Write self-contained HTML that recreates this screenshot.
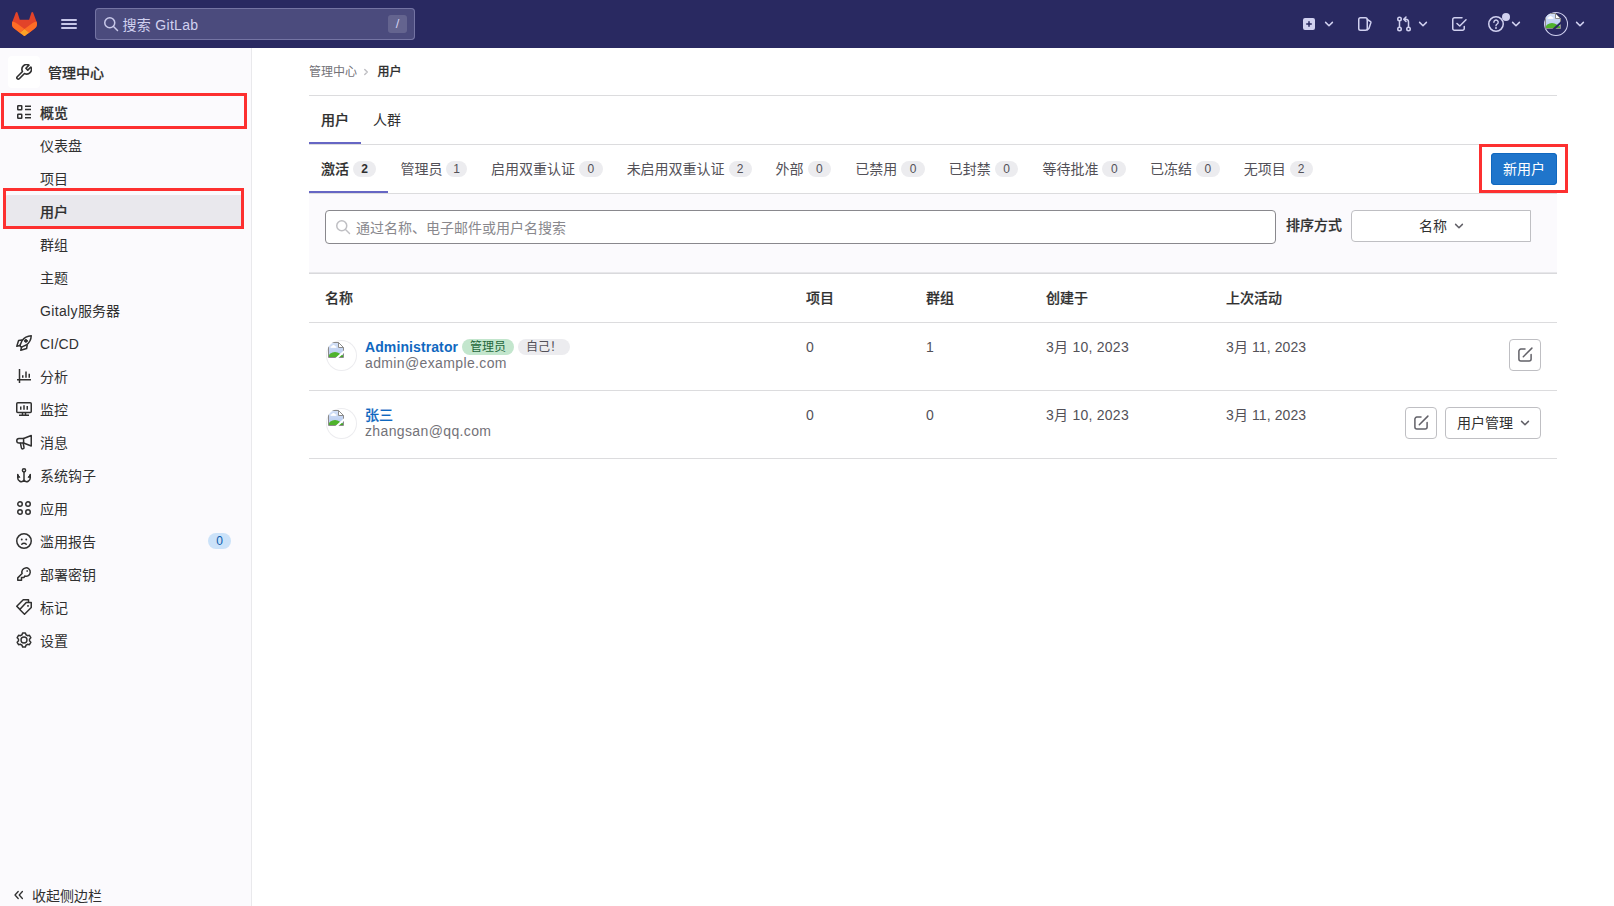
<!DOCTYPE html>
<html lang="zh-CN">
<head>
<meta charset="utf-8">
<title>用户 · 管理中心 · GitLab</title>
<style>
*{box-sizing:border-box;margin:0;padding:0}
html,body{width:1614px;height:906px;overflow:hidden;background:#fff}
body{font-family:"Liberation Sans","Noto Sans CJK SC",sans-serif;font-size:14px;line-height:20px;color:#303030;position:relative}
a{color:inherit;text-decoration:none}
svg{display:block}
/* ---------- top nav ---------- */
.nav{position:absolute;left:0;top:0;width:1614px;height:48px;background:#292961}
.nav .logo{position:absolute;left:12px;top:12px;width:25px;height:24px}
.nav .burger{position:absolute;left:61px;top:19px;width:16px;height:10px}
.nav .burger i{position:absolute;left:0;width:16px;height:2px;background:#c6c6e8;border-radius:1px}
.nav .search{position:absolute;left:95px;top:8px;width:320px;height:32px;border-radius:4px;background:#4b4b7d;box-shadow:inset 0 0 0 1px #7474a3}
.nav .search .txt{position:absolute;left:27.500px;top:7px;font-size:14px;line-height:20px;color:#d1d1f0;letter-spacing:.3px}
.nav .search .kbd{position:absolute;right:8px;top:7px;width:19px;height:18px;border-radius:3px;background:#64648f;color:#d1d1f0;font-size:13px;line-height:18px;text-align:center}
.nav .search svg{position:absolute;left:8px;top:8px;color:#c9c9ea}
.nic{position:absolute;top:16px;width:16px;height:16px;color:#d1d1f0}
.ndot{position:absolute;left:1502px;top:13px;width:8px;height:8px;border-radius:50%;background:#d1d1f0}
.nav-av{position:absolute;left:1544px;top:12px;width:24px;height:24px;border-radius:50%;box-shadow:inset 0 0 0 1px #d1d1f0;overflow:hidden}
/* ---------- sidebar ---------- */
.side{position:absolute;left:0;top:48px;width:252px;height:858px;background:#fbfafd;border-right:1px solid #e9e9ec}
.side .ctx svg{position:absolute;left:8px;top:8px}
.side .ctx{position:absolute;left:8px;top:8px;width:32px;height:32px;border-radius:4px;background:#fff}
.side .ctxt{position:absolute;left:48px;top:15px;font-weight:500;-webkit-text-stroke:.2px currentColor;font-size:14px;line-height:20px;color:#303030}
.side .it{position:absolute;left:4px;width:240px;height:32px;border-radius:4px;font-size:14px;line-height:34px;color:#303030;padding-left:36px}
.side .it svg{position:absolute;left:12px;top:8px}
.side .it.b{font-weight:500;-webkit-text-stroke:.2px currentColor}
.side .it.act{background:#e9e8ed;font-weight:500;-webkit-text-stroke:.2px currentColor}
.side .cnt{-webkit-text-stroke:0;font-weight:normal;position:absolute;right:13px;top:8px;height:16px;width:23px;border-radius:8px;background:#cbe2f9;color:#0b5cad;font-size:12px;line-height:16px;text-align:center}
.red{position:absolute;border:3px solid #fd3030;pointer-events:none}
/* ---------- content ---------- */
.main{position:absolute;left:309px;top:48px;width:1248px}
.hl{position:absolute;left:0;width:1248px;height:1px;background:#dcdcde}
.abs{position:absolute;white-space:nowrap}
.badge{display:inline-block;height:16px;border-radius:8px;background:#ececef;color:#535158;font-size:12px;line-height:16px;padding:0 8px;text-align:center;vertical-align:middle}

.crumb{position:absolute;left:0;top:14px;font-size:12px;line-height:20px;color:#737278;white-space:nowrap}
.crumb b{color:#303030;font-weight:500;-webkit-text-stroke:.2px currentColor}
.crumb .sep{display:inline-block;width:20.5px;height:8px;position:relative}
.crumb .sep svg{position:absolute;left:5.3px;top:0}
.tabs{position:absolute;left:0;width:1248px;height:49px;border-bottom:1px solid #dcdcde;display:flex;white-space:nowrap}
.tab{height:48px;padding:14px 12px;font-size:14px;line-height:20px;color:#303030;display:flex;align-items:center}
.sub .tab{color:#535158}
.tab.on,.sub .tab.on{color:#303030;font-weight:500;-webkit-text-stroke:.2px currentColor;box-shadow:inset 0 -2px 0 0 #6666c4}
.tab .badge{margin-left:4px;width:23.65px;padding:0;font-weight:normal}
.tab .badge.b1{width:20.6px}
.tab .badge.b2{width:22.9px}
.tab.on .badge.b2{width:23.4px}
.tab.on .badge{font-weight:bold;color:#303030;-webkit-text-stroke:0}
.btn-new{position:absolute;left:1182px;top:105px;width:66px;height:32px;border-radius:4px;background:#1f75cb;color:#fff;font-size:14px;line-height:32px;text-align:center;box-shadow:inset 0 0 0 1px #1068bf}
.filter{position:absolute;left:0;top:146px;width:1248px;height:80px;background:#fbfafd;border-bottom:1px solid #d9d9dc;box-shadow:inset 0 -1px 0 #e7e7ea}
.filter .inp{position:absolute;left:16px;top:16px;width:951px;height:34px;border:1px solid #89888d;border-radius:4px;background:#fff}
.filter .inp span{position:absolute;left:30px;top:7px;font-size:14px;line-height:20px;color:#89888d}
.filter .inp svg{position:absolute;left:9px;top:8px;color:#bfbfc3}
.filter .lbl{position:absolute;left:977px;top:21px;font-weight:500;-webkit-text-stroke:.2px currentColor;font-size:14px;line-height:20px}
.filter .dd{position:absolute;left:1042px;top:16px;width:180px;height:32px;border:1px solid #bfbfc3;border-radius:4px 0 0 4px;background:#fff;font-size:14px;line-height:30px;color:#303030}
.th{position:absolute;top:240px;font-weight:500;-webkit-text-stroke:.2px currentColor;font-size:14px;line-height:20px;white-space:nowrap}
.td{position:absolute;font-size:14px;line-height:20px;color:#535158;white-space:nowrap;letter-spacing:.25px}
.av{position:absolute;left:17px;width:31px;height:31px;border-radius:50%;box-shadow:inset 0 0 0 1px #ececef;background:#fff;overflow:hidden}
.av .brk{position:absolute;left:2px;top:2px}
.nav-av .brk{position:absolute;left:.8px;top:1.2px}
.nm{position:absolute;left:56px;font-size:14px;line-height:16px;white-space:nowrap;display:flex;align-items:flex-start}
.nm .badge{margin-left:4px;margin-top:0}
.nm a{color:#1068bf;font-weight:bold;letter-spacing:.1px}
.nm a.cj{font-weight:500;-webkit-text-stroke:.2px currentColor;letter-spacing:0}
.em{position:absolute;left:56px;font-size:14px;line-height:16px;color:#737278;white-space:nowrap;letter-spacing:.37px}
.ibtn{position:absolute;width:32px;height:32px;border-radius:4px;background:#fff;border:1px solid #bfbfc3}
.ibtn svg{position:absolute;left:7px;top:7px;color:#626168}
.mbtn{position:absolute;width:96px;height:32px;border-radius:4px;background:#fff;border:1px solid #bfbfc3;font-size:14px;line-height:30px;padding-left:11px;color:#303030}
</style>
</head>
<body>
<div class="nav">
  <svg class="logo" viewBox="0 0 25 24"><path d="m24.507 9.5-.034-.09L21.082.562a.896.896 0 0 0-1.694.091l-2.290 7.010H7.825L5.535.653a.898.898 0 0 0-1.694-.090L.451 9.411.416 9.500a6.297 6.297 0 0 0 2.090 7.278l.012.010.030.022 5.160 3.867 2.560 1.935 1.554 1.176a1.051 1.051 0 0 0 1.268 0l1.555-1.176 2.560-1.935 5.197-3.890.014-.010A6.297 6.297 0 0 0 24.507 9.500Z" fill="#E24329"/><path d="m24.507 9.5-.034-.09a11.440 11.440 0 0 0-4.560 2.051l-7.447 5.632 4.742 3.584 5.197-3.890.014-.010A6.297 6.297 0 0 0 24.507 9.500Z" fill="#FC6D26"/><path d="m7.707 20.677 2.560 1.935 1.555 1.176a1.051 1.051 0 0 0 1.268 0l1.555-1.176 2.560-1.935-4.743-3.584-4.755 3.584Z" fill="#FCA326"/><path d="M5.010 11.461a11.430 11.430 0 0 0-4.560-2.050L.416 9.500a6.297 6.297 0 0 0 2.090 7.278l.012.010.030.022 5.160 3.867 4.745-3.584-7.444-5.632Z" fill="#FC6D26"/></svg>
  <div class="burger"><i style="top:0"></i><i style="top:4px"></i><i style="top:8px"></i></div>
  <div class="search">
    <svg width="16" height="16" viewBox="0 0 16 16"><g fill="none" stroke="currentColor" stroke-width="1.5" stroke-linecap="round" stroke-linejoin="round"><circle cx="6.750" cy="6.750" r="5"/><path d="M10.500 10.500 14.500 14.500"/></g></svg>
    <span class="txt">搜索 GitLab</span><span class="kbd">/</span>
  </div>
  <div class="nic" style="left:1301px"><svg width="16" height="16" viewBox="0 0 16 16"><path fill="currentColor" fill-rule="evenodd" d="M4 2a2 2 0 0 0-2 2v8a2 2 0 0 0 2 2h8a2 2 0 0 0 2-2V4a2 2 0 0 0-2-2H4zm4.750 3.750a.75.75 0 0 0-1.500 0v1.500h-1.500a.75.75 0 0 0 0 1.500h1.500v1.500a.75.75 0 0 0 1.500 0v-1.500h1.500a.75.75 0 0 0 0-1.500h-1.500v-1.500z"/></svg></div>
  <div class="nic" style="left:1321px"><svg width="16" height="16" viewBox="0 0 16 16"><path fill="none" stroke="currentColor" stroke-width="1.5" stroke-linecap="round" stroke-linejoin="round" d="M4.6 6.4 8 9.8 11.4 6.4"/></svg></div>
  <div class="nic" style="left:1356px"><svg width="16" height="16" viewBox="0 0 16 16"><g fill="none" stroke="currentColor" stroke-width="1.5" stroke-linecap="round" stroke-linejoin="round"><rect x="2.750" y="1.750" width="8.500" height="12.500" rx="1.750"/><path d="M11.250 3.500l3.300 2.100a.8.8 0 0 1 .35.900L12.900 12.500l-1.650 1.300"/></g></svg></div>
  <div class="nic" style="left:1396px"><svg width="16" height="16" viewBox="0 0 16 16"><g fill="none" stroke="currentColor" stroke-width="1.5" stroke-linecap="round" stroke-linejoin="round"><circle cx="3.500" cy="3" r="1.750"/><circle cx="3.500" cy="13" r="1.750"/><circle cx="12.500" cy="13" r="1.750"/><path d="M3.500 4.750v6.500M12.500 11.250V6a2.750 2.750 0 0 0-2.750-2.750H8M10 1 7.750 3.250 10 5.500"/></g></svg></div>
  <div class="nic" style="left:1415px"><svg width="16" height="16" viewBox="0 0 16 16"><path fill="none" stroke="currentColor" stroke-width="1.5" stroke-linecap="round" stroke-linejoin="round" d="M4.6 6.4 8 9.8 11.4 6.4"/></svg></div>
  <div class="nic" style="left:1451px"><svg width="16" height="16" viewBox="0 0 16 16"><g fill="none" stroke="currentColor" stroke-width="1.5" stroke-linecap="round" stroke-linejoin="round"><path d="M13.250 10.500v2a1.750 1.750 0 0 1-1.750 1.750h-8A1.750 1.750 0 0 1 1.750 12.500v-9A1.750 1.750 0 0 1 3.500 1.750h7.500"/><path d="M6 7.500l2.750 2.500L15 3.750"/></g></svg></div>
  <div class="nic" style="left:1488px"><svg width="16" height="16" viewBox="0 0 16 16"><g fill="none" stroke="currentColor" stroke-width="1.5" stroke-linecap="round" stroke-linejoin="round"><circle cx="8" cy="8" r="7.250"/><path d="M5.900 6.200a2.150 2.150 0 1 1 3.300 1.800c-.8.500-1.200.900-1.200 1.750" stroke-width="1.400"/><circle cx="8" cy="12" r=".95" fill="currentColor" stroke="none"/></g></svg></div>
  <div class="ndot"></div>
  <div class="nic" style="left:1508px"><svg width="16" height="16" viewBox="0 0 16 16"><path fill="none" stroke="currentColor" stroke-width="1.5" stroke-linecap="round" stroke-linejoin="round" d="M4.6 6.4 8 9.8 11.4 6.4"/></svg></div>
  <div class="nav-av"><svg class="brk" width="16" height="16" viewBox="0 0 16 16"><defs><linearGradient id="sk1" x1="0" y1="0" x2="0" y2="1"><stop offset="0" stop-color="#d3e0f7"/><stop offset="1" stop-color="#b4c9ee"/></linearGradient><clipPath id="pg1"><path d="M1 1H10.500V5.500H15V15H1z"/></clipPath></defs><path d="M.5.500H10.500L15.500 5.500V15.500H.500z" fill="#fff" stroke="#8b8b8b"/><g clip-path="url(#pg1)"><rect x="1" y="1" width="14" height="14" fill="url(#sk1)"/><path d="M3 5.500c.5-1.500 1.500-2.500 2.500-2.500s2 1 2.500 2.500z" fill="#fff"/><rect x="2.500" y="4.500" width="6" height="1.200" fill="#fff"/><ellipse cx="7" cy="15.500" rx="6.500" ry="5.500" fill="#4fb32c"/><ellipse cx="13" cy="16" rx="3.500" ry="3" fill="#45a626"/></g><path d="M10.500.500V5.500H15.500" fill="#fff" stroke="#8b8b8b"/><path d="M10.500.500 15.500 5.500" stroke="#8b8b8b" fill="none"/><path d="M6.800 16.500 9.800 16.500 16.500 10.600 16.500 7.900z" fill="#292961"/></svg></div>
  <div class="nic" style="left:1572px"><svg width="16" height="16" viewBox="0 0 16 16"><path fill="none" stroke="currentColor" stroke-width="1.5" stroke-linecap="round" stroke-linejoin="round" d="M4.6 6.4 8 9.8 11.4 6.4"/></svg></div>
</div>
<div class="side">
  <div class="ctx"><svg width="16" height="16" viewBox="0 0 16 16"><path fill="none" stroke="currentColor" stroke-width="1.5" stroke-linecap="round" stroke-linejoin="round" transform="translate(8 8) scale(1.08) translate(-8 -8)" d="M12.6 1.64 9.76 4.48 11.52 6.24 14.36 3.4A4.4 4.4 0 0 1 8.45 9.39L3.62 14.22A1.3 1.3 0 0 1 1.78 12.38L6.61 7.55A4.4 4.4 0 0 1 12.6 1.64z"/></svg></div>
  <div class="ctxt">管理中心</div>
  <div class="it b" style="top:48px"><svg width="16" height="16" viewBox="0 0 16 16"><g fill="none" stroke="currentColor" stroke-width="1.5" stroke-linecap="butt" stroke-linejoin="miter"><rect x="1.75" y="1.75" width="4" height="4" rx=".5"/><rect x="1.75" y="10.25" width="4" height="4" rx=".5"/><path d="M9 2.25h6M9 5.5h6M9 10.5h6M9 13.75h6"/></g></svg>概览</div>
  <div class="it" style="top:81px">仪表盘</div>
  <div class="it" style="top:114px">项目</div>
  <div class="it act" style="top:147px">用户</div>
  <div class="it" style="top:180px">群组</div>
  <div class="it" style="top:213px">主题</div>
  <div class="it" style="top:246px"><span style="letter-spacing:.35px">Gitaly</span>服务器</div>
  <div class="it" style="top:279px;letter-spacing:.2px"><svg width="16" height="16" viewBox="0 0 16 16"><g fill="none" stroke="currentColor" stroke-width="1.5" stroke-linecap="round" stroke-linejoin="round"><path d="M15.25.75C11.5.9 8.2 2.6 6 5.75L4.1 10.1C3.8 11.3 4.7 12.2 5.9 11.9l4.35-1.9C13.4 7.8 15.1 4.5 15.25.75z"/><path d="M6 5 2.6 5.5 .8 11.2 4 10.5"/><path d="M11.2 10 10.6 13.5 4.8 15.2 5.6 12"/><circle cx="9.9" cy="5.9" r="1.4" fill="currentColor" stroke-width="1"/></g></svg>CI/CD</div>
  <div class="it" style="top:312px"><svg width="16" height="16" viewBox="0 0 16 16"><g fill="none" stroke="currentColor" stroke-width="1.5" stroke-linecap="butt" stroke-linejoin="miter"><path d="M3.5 1v14M1 11.75h14"/><path d="M6.75 7.25v2.5M10 3.5v6.25M13.25 5.75v4"/></g></svg>分析</div>
  <div class="it" style="top:345px"><svg width="16" height="16" viewBox="0 0 16 16"><g fill="none" stroke="currentColor" stroke-width="1.5" stroke-linecap="butt" stroke-linejoin="miter"><rect x=".75" y="1.75" width="14.5" height="9.75" rx="1"/><path d="M3 14.25h10M6.5 11.5v2.75M9.5 11.5v2.75"/><path d="M4.75 5.5v3.25M8 4.25v4.5M11.25 5v3.75"/></g></svg>监控</div>
  <div class="it" style="top:378px"><svg width="16" height="16" viewBox="0 0 16 16"><g fill="none" stroke="currentColor" stroke-width="1.5" stroke-linecap="round" stroke-linejoin="round"><path d="M7.6 4.5H3A2.25 2.25 0 0 0 3 9H7.6"/><path d="M7.6 4.5 15.25 1.5V12L7.6 9z"/><path d="M4.4 9.2l1 4.6a1.3 1.3 0 0 0 2.6-.5L7.2 9.2"/></g></svg>消息</div>
  <div class="it" style="top:411px"><svg width="16" height="16" viewBox="0 0 16 16"><g fill="none" stroke="currentColor" stroke-width="1.5" stroke-linecap="round" stroke-linejoin="round"><circle cx="8" cy="3.3" r="1.6"/><path d="M8 5v8.25"/><path d="M1.75 7.5V10a3.6 4 0 0 0 6.25 3.25A3.6 4 0 0 0 14.250 10V7.500"/><path d="M1.75 7.5 3.9 10.300H1.900zM14.250 7.500 12.100 10.300h2z" fill="currentColor" stroke-width="1"/></g></svg>系统钩子</div>
  <div class="it" style="top:444px"><svg width="16" height="16" viewBox="0 0 16 16"><g fill="none" stroke="currentColor" stroke-width="1.5" stroke-linecap="round" stroke-linejoin="round"><circle cx="4" cy="4" r="2.25"/><circle cx="12" cy="4" r="2.25"/><circle cx="4" cy="12" r="2.25"/><circle cx="12" cy="12" r="2.25"/></g></svg>应用</div>
  <div class="it" style="top:477px"><svg width="16" height="16" viewBox="0 0 16 16"><g fill="none" stroke="currentColor" stroke-width="1.5" stroke-linecap="round" stroke-linejoin="round"><circle cx="8" cy="8" r="7.25"/><path d="M5.75 11.25a3 3 0 0 1 4.5 0" stroke-width="1.4"/><circle cx="5.75" cy="6.5" r=".95" fill="currentColor" stroke="none"/><circle cx="10.25" cy="6.5" r=".95" fill="currentColor" stroke="none"/></g></svg>滥用报告<span class="cnt">0</span></div>
  <div class="it" style="top:510px"><svg width="16" height="16" viewBox="0 0 16 16"><g fill="none" stroke="currentColor" stroke-width="1.5" stroke-linecap="butt" stroke-linejoin="round"><path d="M1.75 14.25V11.9L6.100 7.500A4.200 4.200 0 1 1 8.700 10.050L8 11.500H5.500V14.250z"/><rect x="10.400" y="4.200" width="1.600" height="1.600" rx=".3" fill="currentColor" stroke="none"/></g></svg>部署密钥</div>
  <div class="it" style="top:543px"><svg width="16" height="16" viewBox="0 0 16 16"><g fill="none" stroke="currentColor" stroke-width="1.5" stroke-linecap="butt" stroke-linejoin="round"><path d="M10.25 3.5H15.25V8.500L8.500 15.250 3.750 10.500z"/><path d="M12.500 3.250V.750H7.250L.750 7.250 3.600 10.100"/><rect x="11.200" y="6.100" width="1.600" height="1.600" rx=".3" fill="currentColor" stroke="none"/></g></svg>标记</div>
  <div class="it" style="top:576px"><svg width="16" height="16" viewBox="0 0 16 16"><g fill="none" stroke="currentColor" stroke-width="1.5" stroke-linecap="round" stroke-linejoin="round"><path d="M10.01 2.77 L9.37 0.93 L6.63 0.93 L5.99 2.77 L4.48 3.65 L2.57 3.28 L1.19 5.66 L2.47 7.12 L2.47 8.88 L1.19 10.34 L2.57 12.72 L4.48 12.35 L5.99 13.23 L6.63 15.07 L9.37 15.07 L10.01 13.23 L11.52 12.35 L13.43 12.72 L14.81 10.34 L13.53 8.88 L13.53 7.12 L14.81 5.66 L13.43 3.28 L11.52 3.65Z"/><circle cx="8" cy="8" r="3" stroke-width="1.4"/></g></svg>设置</div>
  <div class="abs" style="left:12.5px;top:839px"><svg width="16" height="16" viewBox="0 0 16 16"><g fill="none" stroke="currentColor" stroke-width="1.5" stroke-linecap="round" stroke-linejoin="round"><path d="M5.2 4.5 2 8l3.200 3.500M9.400 4.500 6.200 8l3.200 3.500" stroke-width="1.300"/></g></svg></div>
  <div class="abs" style="left:32px;top:838px;font-size:14px;line-height:20px">收起侧边栏</div>
</div>
<div class="red" style="left:1px;top:93px;width:246px;height:36px"></div>
<div class="red" style="left:3px;top:188px;width:241px;height:41px"></div>
<div class="main">
  <div class="crumb">管理中心<span class="sep"><svg width="8" height="8" viewBox="0 0 8 8"><path d="M2.75 1.4 5.300 4 2.750 6.600" fill="none" stroke="#bfbfc3" stroke-width="1.400" stroke-linecap="round" stroke-linejoin="round"/></svg></span><b>用户</b></div>
  <div class="hl" style="top:47px"></div>
  <div class="tabs" style="top:48px">
    <div class="tab on">用户</div>
    <div class="tab">人群</div>
  </div>
  <div class="tabs sub" style="top:97px">
    <div class="tab on">激活<span class="badge b2">2</span></div>
    <div class="tab">管理员<span class="badge b1">1</span></div>
    <div class="tab">启用双重认证<span class="badge">0</span></div>
    <div class="tab">未启用双重认证<span class="badge b2">2</span></div>
    <div class="tab">外部<span class="badge">0</span></div>
    <div class="tab">已禁用<span class="badge">0</span></div>
    <div class="tab">已封禁<span class="badge">0</span></div>
    <div class="tab">等待批准<span class="badge">0</span></div>
    <div class="tab">已冻结<span class="badge">0</span></div>
    <div class="tab">无项目<span class="badge b2">2</span></div>
  </div>
  <div class="btn-new">新用户</div>
  <div class="filter">
    <div class="inp"><svg width="16" height="16" viewBox="0 0 16 16"><g fill="none" stroke="currentColor" stroke-width="1.5" stroke-linecap="round" stroke-linejoin="round"><circle cx="6.750" cy="6.750" r="5"/><path d="M10.500 10.500 14.500 14.500"/></g></svg><span>通过名称、电子邮件或用户名搜索</span></div>
    <div class="lbl">排序方式</div>
    <div class="dd"><span class="abs" style="left:67px;top:0">名称</span><span class="abs" style="left:99px;top:7px;color:#626168"><svg width="16" height="16" viewBox="0 0 16 16"><path fill="none" stroke="currentColor" stroke-width="1.5" stroke-linecap="round" stroke-linejoin="round" d="M4.6 6.4 8 9.8 11.4 6.4"/></svg></span></div>
  </div>
  <div class="th" style="left:16px">名称</div>
  <div class="th" style="left:497px">项目</div>
  <div class="th" style="left:617px">群组</div>
  <div class="th" style="left:737px">创建于</div>
  <div class="th" style="left:917px">上次活动</div>
  <div class="hl" style="top:274px"></div>
  <div class="av" style="top:292px"><svg class="brk" width="16" height="16" viewBox="0 0 16 16"><defs><linearGradient id="sk2" x1="0" y1="0" x2="0" y2="1"><stop offset="0" stop-color="#d3e0f7"/><stop offset="1" stop-color="#b4c9ee"/></linearGradient><clipPath id="pg2"><path d="M1 1H10.500V5.500H15V15H1z"/></clipPath></defs><path d="M.5.500H10.500L15.500 5.500V15.500H.500z" fill="#fff" stroke="#8b8b8b"/><g clip-path="url(#pg2)"><rect x="1" y="1" width="14" height="14" fill="url(#sk2)"/><path d="M3 5.500c.5-1.500 1.500-2.500 2.500-2.500s2 1 2.500 2.500z" fill="#fff"/><rect x="2.500" y="4.500" width="6" height="1.200" fill="#fff"/><ellipse cx="7" cy="15.500" rx="6.500" ry="5.500" fill="#4fb32c"/><ellipse cx="13" cy="16" rx="3.500" ry="3" fill="#45a626"/></g><path d="M10.500.500V5.500H15.500" fill="#fff" stroke="#8b8b8b"/><path d="M10.500.500 15.500 5.500" stroke="#8b8b8b" fill="none"/><path d="M6.800 16.500 9.800 16.500 16.500 10.600 16.500 7.900z" fill="#ffffff"/></svg></div>
  <div class="nm" style="top:291px"><a>Administrator</a><span class="badge" style="background:#c3e6cd;color:#24663b">管理员</span><span class="badge">自己！</span></div>
  <div class="em" style="top:307px">admin@example.com</div>
  <div class="td" style="left:497px;top:289px">0</div>
  <div class="td" style="left:617px;top:289px">1</div>
  <div class="td" style="left:737px;top:289px">3月 10, 2023</div>
  <div class="td" style="left:917px;top:289px;letter-spacing:.1px">3月 11, 2023</div>
  <div class="ibtn" style="left:1200px;top:291px"><svg width="16" height="16" viewBox="0 0 16 16"><g fill="none" stroke="currentColor" stroke-width="1.5" stroke-linecap="round" stroke-linejoin="round"><path d="M8 2.1H3.9a2 2 0 0 0-2 2V12a2 2 0 0 0 2 2H12.100a2 2 0 0 0 2-2V7.600"/><path d="M6.300 9.700 14.900 1.100"/></g></svg></div>
  <div class="hl" style="top:342px"></div>
  <div class="av" style="top:360px"><svg class="brk" width="16" height="16" viewBox="0 0 16 16"><defs><linearGradient id="sk3" x1="0" y1="0" x2="0" y2="1"><stop offset="0" stop-color="#d3e0f7"/><stop offset="1" stop-color="#b4c9ee"/></linearGradient><clipPath id="pg3"><path d="M1 1H10.500V5.500H15V15H1z"/></clipPath></defs><path d="M.5.500H10.500L15.500 5.500V15.500H.500z" fill="#fff" stroke="#8b8b8b"/><g clip-path="url(#pg3)"><rect x="1" y="1" width="14" height="14" fill="url(#sk3)"/><path d="M3 5.500c.5-1.500 1.500-2.500 2.500-2.500s2 1 2.500 2.500z" fill="#fff"/><rect x="2.500" y="4.500" width="6" height="1.200" fill="#fff"/><ellipse cx="7" cy="15.500" rx="6.500" ry="5.500" fill="#4fb32c"/><ellipse cx="13" cy="16" rx="3.500" ry="3" fill="#45a626"/></g><path d="M10.500.500V5.500H15.500" fill="#fff" stroke="#8b8b8b"/><path d="M10.500.500 15.500 5.500" stroke="#8b8b8b" fill="none"/><path d="M6.800 16.500 9.800 16.500 16.500 10.600 16.500 7.900z" fill="#ffffff"/></svg></div>
  <div class="nm" style="top:359px"><a class="cj">张三</a></div>
  <div class="em" style="top:375px">zhangsan@qq.com</div>
  <div class="td" style="left:497px;top:357px">0</div>
  <div class="td" style="left:617px;top:357px">0</div>
  <div class="td" style="left:737px;top:357px">3月 10, 2023</div>
  <div class="td" style="left:917px;top:357px;letter-spacing:.1px">3月 11, 2023</div>
  <div class="ibtn" style="left:1096px;top:359px"><svg width="16" height="16" viewBox="0 0 16 16"><g fill="none" stroke="currentColor" stroke-width="1.5" stroke-linecap="round" stroke-linejoin="round"><path d="M8 2.1H3.9a2 2 0 0 0-2 2V12a2 2 0 0 0 2 2H12.100a2 2 0 0 0 2-2V7.600"/><path d="M6.300 9.700 14.900 1.100"/></g></svg></div>
  <div class="mbtn" style="left:1136px;top:359px">用户管理<span class="abs" style="left:71px;top:7px;color:#626168"><svg width="16" height="16" viewBox="0 0 16 16"><path fill="none" stroke="currentColor" stroke-width="1.5" stroke-linecap="round" stroke-linejoin="round" d="M4.6 6.4 8 9.8 11.4 6.4"/></svg></span></div>
  <div class="hl" style="top:410px"></div>
</div>
<div class="red" style="left:1479px;top:144px;width:89px;height:49px"></div>
</body>
</html>
